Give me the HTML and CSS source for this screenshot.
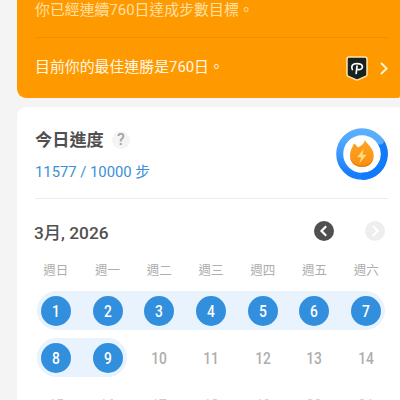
FILE: index.html
```html
<!DOCTYPE html>
<html lang="zh-Hant">
<head>
<meta charset="utf-8">
<title>今日進度</title>
<link rel="stylesheet" href="styles.css">
</head>
<body>
<section class="streak-card">
  <p class="streak-now">你已經連續760日達成步數目標。</p>
  <div class="streak-best">
    <p>目前你的最佳連勝是760日。</p>
    <svg class="badge" width="22" height="25" viewBox="0 0 22 25">
      <path d="M3.200 1h15.600q2.200 0 2.200 2.200v15q0 1.500-1.400 2.200L12.200 23.600q-1.200.6-2.400 0L2.400 20.400Q1 19.700 1 18.200v-15Q1 1 3.200 1z" fill="#17231f" stroke="#ffe6b0" stroke-width="1.500"/>
      <path d="M6.300 13.500C4.700 10.200 6.600 7.700 10.600 7.700c3.800 0 5.800 1 5.800 3.100 0 2-2 3.300-4.700 2.700M11 10L10.200 17.500" fill="none" stroke="#fff" stroke-width="1.700" stroke-linecap="round"/>
    </svg>
    <svg class="chevron" width="8" height="13" viewBox="0 0 8 13"><path d="M1 1l5.700 5.500L1 12" fill="none" stroke="#fff4dc" stroke-width="1.900"/></svg>
  </div>
</section>
<main class="progress-card">
  <header class="today">
    <div>
      <div class="title-row"><h1>今日進度</h1><span class="help">?</span></div>
      <p class="steps">11577 / 10000 步</p>
    </div>
    <svg class="ring" width="52" height="52" viewBox="0 0 52 52">
      <defs>
        <linearGradient id="arc" x1=".65" y1="0" x2=".45" y2="1"><stop offset="0" stop-color="#5aaeff"/><stop offset=".25" stop-color="#52a9fe"/><stop offset=".6" stop-color="#3c98fc"/><stop offset="1" stop-color="#167dfb"/></linearGradient>
        <linearGradient id="fire" x1="0" y1="0" x2="0" y2="1"><stop offset="0" stop-color="#ffa51f"/><stop offset="1" stop-color="#f98e14"/></linearGradient>
      </defs>
      <circle cx="26" cy="26" r="22.300" fill="none" stroke="url(#arc)" stroke-width="7"/>
      <path d="M44.700 13.800A22.300 22.300 0 0 1 26 48.300" fill="none" stroke="#117bfc" stroke-width="7"/>
      <circle cx="44.300" cy="13.200" r="3.400" fill="#5aaeff"/>
      <path d="M29 12.300C31 16.500 37.700 20 37.700 27.500 37.700 34.500 32.500 39 26 39S14 34.500 14 27.500C14 22.500 16.500 19 18 15.500c1.600 1 3 2.500 3.800 4C25 18.300 28 16 29 12.300z" fill="url(#fire)"/>
      <path d="M14.100 29.500C15 35.500 20 39 26 39s10.600-3.300 11.600-9C35.500 34.700 31.500 37.400 26 37.400s-10-2.700-11.900-7.900z" fill="#e9820f"/>
      <path d="M27.800 20.500l-6.600 8.700h3.900L23.300 35.500l7.300-8.800h-4.200z" fill="#ffda7b"/>
    </svg>
  </header>
  <section class="calendar">
    <div class="month-bar">
      <h2>3月, 2026</h2>
      <svg class="prev" width="20" height="20" viewBox="0 0 20 20"><circle cx="10" cy="10" r="10" fill="#505050"/><path d="M12.200 5.300L7.500 10l4.700 4.700" fill="none" stroke="#fff" stroke-width="2.200"/></svg>
      <svg width="20" height="20" viewBox="0 0 20 20"><circle cx="10" cy="10" r="10" fill="#eeeeee"/><path d="M8 5.300l4.700 4.700L8 14.700" fill="none" stroke="#fff" stroke-width="2.200"/></svg>
    </div>
    <div class="week names"><span>週日</span><span>週一</span><span>週二</span><span>週三</span><span>週四</span><span>週五</span><span>週六</span></div>
    <div class="week run-7"><span class="done"><b>1</b></span><span class="done"><b>2</b></span><span class="done"><b>3</b></span><span class="done"><b>4</b></span><span class="done"><b>5</b></span><span class="done"><b>6</b></span><span class="done"><b>7</b></span></div>
    <div class="week run-2"><span class="done"><b>8</b></span><span class="done"><b>9</b></span><span><b>10</b></span><span><b>11</b></span><span><b>12</b></span><span><b>13</b></span><span><b>14</b></span></div>
    <div class="week next"><span><b>15</b></span><span><b>16</b></span><span><b>17</b></span><span><b>18</b></span><span><b>19</b></span><span><b>20</b></span><span><b>21</b></span></div>
  </section>
</main>
</body>
</html>
```
FILE: styles.css
```css
* { box-sizing: border-box; }

body {
  margin: 0;
  width: 400px;
  height: 400px;
  overflow: hidden;
  background: #f4f4f4;
  font-family: Roboto, "Noto Sans CJK TC", sans-serif;
  color: #505050;
}

h1, h2, p { margin: 0; }
svg { display: block; flex: none; }

.streak-card {
  height: 98px;
  margin-left: 17px;
  padding: 0 12px 0 18px;
  background: #ff9900;
  border-radius: 0 0 2px 9px;
  color: #fff8e8;
  font-size: 14.9px;
}

.streak-now {
  height: 38px;
  line-height: 20px;
  border-bottom: 1px solid #ed9005;
  color: #ffe0a5;
}

.streak-best {
  display: flex;
  align-items: center;
  height: 60px;
}

.streak-best p { flex: 1; line-height: 20px; padding-bottom: 2px; }
.badge { margin-right: 12px; }

.progress-card {
  height: 293px;
  margin: 9px 0 0 17px;
  overflow: hidden;
  background: #fff;
  border-radius: 9px 0 0 0;
}

.today {
  display: flex;
  justify-content: space-between;
  height: 92px;
  margin: 0 12px 0 18px;
  padding-top: 21px;
  border-bottom: 1px solid #ececec;
}

.title-row { display: flex; align-items: center; height: 24px; }
h1 { font-size: 17.2px; line-height: 24px; font-weight: 700; }

.help {
  width: 18px;
  height: 18px;
  margin-left: 8px;
  border-radius: 50%;
  background: #f4f4f4;
  color: #a3a3a3;
  font-size: 16px;
  font-weight: 500;
  line-height: 18px;
  text-align: center;
}

.steps {
  margin-top: 9px;
  font-size: 14.8px;
  line-height: 22px;
  color: #3b8fd8;
}

.calendar { padding: 20px 8px 0 13px; }

.month-bar {
  display: flex;
  align-items: center;
  height: 24px;
  margin: 0 7px 0 4px;
}

h2 { flex: 1; padding-top: 4px; font-size: 17.3px; font-weight: 500; line-height: 24px; }
.prev { margin: 0 31px 0 0; }

.week {
  display: grid;
  grid-template-columns: repeat(7, 1fr);
  align-items: center;
  justify-items: center;
  height: 39px;
  margin-bottom: 8px;
  color: #adadad;
  font-size: 16px;
}

.names {
  height: 20px;
  margin: 16px 0 12px;
  font-size: 12.5px;
}

.run-7 {
  margin-left: 7px;
  margin-right: 7px;
  border-radius: 20px;
  background: #e8f3fd;
  grid-template-columns: repeat(7, 51.7px);
  justify-content: center;
}

.run-2 {
  background: radial-gradient(circle at 26.5px 50%, #e8f3fd 19.3px, transparent 19.8px),
    radial-gradient(circle at 77.5px 50%, #e8f3fd 19.3px, transparent 19.8px),
    linear-gradient(#e8f3fd, #e8f3fd) 26px 0 / 51.5px 100% no-repeat;
}

.next { color: #cccccc; }

.week b {
  display: block;
  font-weight: 500;
  transform: translateY(1px) scaleX(.86);
}

.done {
  width: 30px;
  height: 30px;
  border-radius: 50%;
  background: #318fdd;
  color: #fff;
  line-height: 30px;
  text-align: center;
}
```
